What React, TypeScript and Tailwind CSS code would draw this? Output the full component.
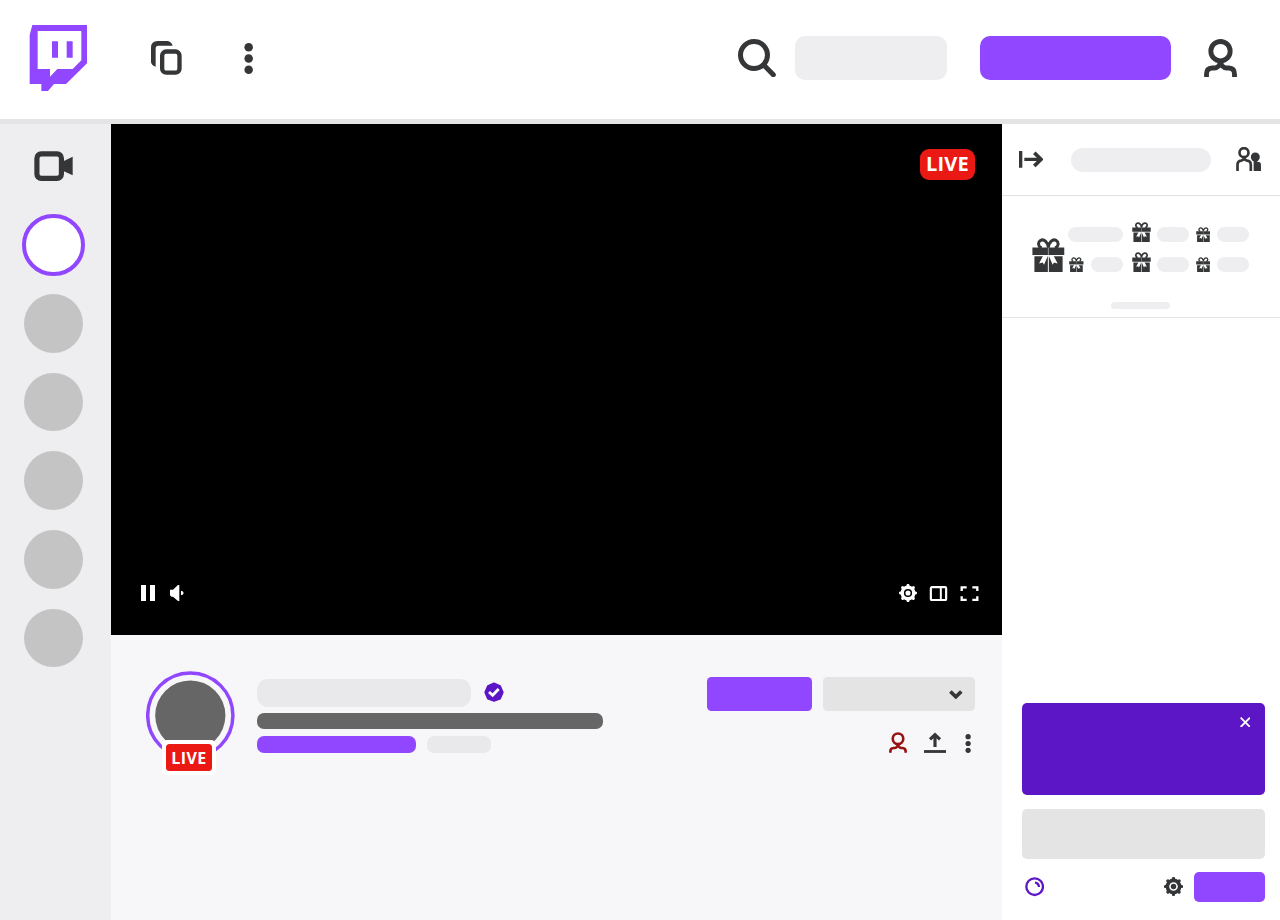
import React from "react";

type IconProps = { className?: string };

function Logo() {
  return (
    <svg viewBox="0 0 174 198" className="h-[66px] w-[58px] shrink-0">
      <path d="M2 30 10 0h164v115l-63 62H75l-18 21H37v-21H2Z" fill="#9147ff" />
      <path d="M26 18h131v88l-26 26H85l-22 23v-23H26Z" fill="#fff" />
      <path d="M69 49h18v49H69zM113 49h18v49h-18z" fill="#9147ff" />
    </svg>
  );
}

function CopyIcon({ className }: IconProps) {
  return (
    <svg viewBox="0 0 93 102" className={className}>
      <path d="M0 20Q0 0 20 0h31q11 3 14 14H22q-8 0-8 8v55Q2 74 0 64Z" fill="currentColor" />
      <rect x="33.5" y="31.5" width="52" height="63.5" rx="12" fill="none" stroke="currentColor" strokeWidth="13" />
    </svg>
  );
}

function DotsIcon({ className }: IconProps) {
  return (
    <svg viewBox="0 0 27 93" className={className} fill="currentColor">
      <circle cx="14" cy="13" r="12.8" />
      <circle cx="14" cy="46.5" r="12.8" />
      <circle cx="14" cy="80" r="12.8" />
    </svg>
  );
}

function SearchIcon({ className }: IconProps) {
  return (
    <svg viewBox="0 0 114 114" className={className} fill="none" stroke="currentColor" strokeWidth="15" strokeLinecap="round">
      <circle cx="48" cy="48" r="40.5" />
      <path d="m78 79 28 28" />
    </svg>
  );
}

function PersonIcon({ className }: IconProps) {
  return (
    <svg viewBox="0 0 99 114" className={className} fill="none" stroke="currentColor" strokeWidth="14.5">
      <circle cx="49.5" cy="36.5" r="29" />
      <path d="M7.500 114v-9q0-17 17-18h7q12 0 22-19" />
      <path d="M91.500 114v-9q0-17-17-18h-7q-12 0-22-19" />
    </svg>
  );
}

function CameraIcon({ className }: IconProps) {
  return (
    <svg viewBox="0 0 117 90" className={className}>
      <rect x="8.75" y="8.75" width="73.5" height="73.5" rx="13" fill="none" stroke="currentColor" strokeWidth="15.5" />
      <path d="m88 31 28-14v56L88 60Z" fill="currentColor" />
    </svg>
  );
}

function CollapseIcon({ className }: IconProps) {
  return (
    <svg viewBox="0 0 73 50" className={className} fill="none" stroke="currentColor" strokeWidth="10">
      <path d="M5 0v50M16 25h50" />
      <path d="m46 5 20 20-20 20" strokeWidth="11" />
    </svg>
  );
}

function PeopleIcon({ className }: IconProps) {
  return (
    <svg viewBox="0 0 76 72" className={className}>
      <g fill="none" stroke="currentColor" strokeWidth="8">
        <circle cx="24" cy="17" r="13.5" />
        <path d="M4.500 72V54q0-12 11-13 6-1 9-7 3 6 9 7 11 1 11 13v18" />
      </g>
      <circle cx="58" cy="30" r="13.500" fill="currentColor" />
      <path d="M53 38h11v7h4q7 0 7 7v20H53Z" fill="currentColor" />
    </svg>
  );
}

function GiftIcon({ className }: IconProps) {
  return (
    <svg viewBox="0 0 98 104" className={className}>
      <path d="M1 29h96v22H1zM7 55h40.500v49H7zM50.500 55H92v49H50.500z" fill="currentColor" />
      <path d="M49 29C48 13 36 2 26 7c-10 6-8 19 3 23M49 29C50 13 62 2 72 7c10 6 8 19-3 23" fill="none" stroke="currentColor" strokeWidth="9" />
      <path d="M34 52 21 77l11-3 4 7 12-28ZM64 52l13 25-11-3-4 7-12-28Z" fill="#fff" />
      <path d="M49 30v21" stroke="#fff" strokeWidth="1.500" />
    </svg>
  );
}

function GearIcon({ className }: IconProps) {
  return (
    <svg viewBox="-28 -28 56 56" className={className}>
      <circle r="18" fill="none" stroke="currentColor" strokeWidth="10.500" />
      <circle r="8" fill="currentColor" />
      <path
        d="M0-21.500v-2M0 21.500v2M-21.500 0h-2M21.500 0h2M15-15l1.500-1.500M-15-15l-1.500-1.500M15 15l1.500 1.500M-15 15l-1.500 1.500"
        stroke="currentColor"
        strokeWidth="9.500"
        strokeLinecap="round"
      />
    </svg>
  );
}

function PauseIcon() {
  return (
    <svg viewBox="0 0 42 48" className="h-4 w-[14px]" fill="currentColor">
      <path d="M0 0h15v48H0zM27 0h15v48H27z" />
    </svg>
  );
}

function SpeakerIcon() {
  return (
    <svg viewBox="0 0 43 48" className="h-4 w-[14.300px]" fill="currentColor">
      <path d="M0 14h9L24 0h4v48h-4L9 35H4l-4-4ZM33 17q8 1 8 7t-8 7Z" />
    </svg>
  );
}

function ColumnsIcon() {
  return (
    <svg viewBox="0 0 57 46" className="h-[15.300px] w-[19px]" fill="none" stroke="currentColor">
      <rect x="5.500" y="3.500" width="46" height="39" rx="3.500" strokeWidth="6.500" />
      <path d="M35.500 3v40" strokeWidth="6" />
    </svg>
  );
}

function FullscreenIcon() {
  return (
    <svg viewBox="0 0 57 46" className="h-[15.300px] w-[19px]" fill="none" stroke="currentColor" strokeWidth="7">
      <path d="M5 15V4h15M37 4h15v11M52 31v11H37M20 42H5V31" />
    </svg>
  );
}

function VerifiedIcon() {
  return (
    <svg viewBox="0 0 60 60" className="size-5">
      <path
        d="m30 4 18.500 8 8 19-8 19L30 57l-18.500-7-8-19 8-19Z"
        fill="#5c16c5"
        stroke="#5c16c5"
        strokeWidth="5"
        strokeLinejoin="round"
      />
      <path d="m15 30 11 10 18-19" fill="none" stroke="#fff" strokeWidth="8.500" />
    </svg>
  );
}

function ChevronIcon() {
  return (
    <svg viewBox="0 0 41 28" className="h-[9.300px] w-[13.700px]" fill="none" stroke="currentColor" strokeWidth="11">
      <path d="m4 4.500 16.500 16L37 4.500" />
    </svg>
  );
}

function ShareIcon() {
  return (
    <svg viewBox="0 0 66 63" className="h-[21px] w-[22px]" fill="none" stroke="currentColor" strokeWidth="9.500">
      <path d="M33 45V9M18 22 33 8l15 14" />
      <path d="M0 58.500h66" strokeWidth="8.500" />
    </svg>
  );
}

function CloseIcon() {
  return (
    <svg viewBox="0 0 32 32" className="size-[10.700px]" fill="none" stroke="#fff" strokeWidth="5.500">
      <path d="m2 2 28 28M30 2 2 30" />
    </svg>
  );
}

function PointsIcon() {
  return (
    <svg viewBox="0 0 58 58" className="size-[19.300px]" fill="none" stroke="#5c16c5">
      <circle cx="29" cy="29" r="25" strokeWidth="7" />
      <path d="M30 17q11 1 12 13" strokeWidth="7" />
    </svg>
  );
}

function AvatarRing() {
  return (
    <svg viewBox="0 0 89 89" className="size-[89px]">
      <circle cx="44.300" cy="44.500" r="42.600" fill="none" stroke="#9147ff" strokeWidth="3.500" />
      <circle cx="44.300" cy="44.500" r="35.100" fill="#666" />
    </svg>
  );
}

const Pill = ({ className }: IconProps) => <div className={`shrink-0 bg-[#eeeef0] ${className}`} />;

const channels = [1, 2, 3, 4, 5];

function Header() {
  return (
    <header className="flex h-[124px] shrink-0 items-center border-b-[5px] border-[#e4e4e4] bg-white pr-[42.700px] pb-[3px] pl-[29px]">
      <Logo />
      <CopyIcon className="ml-[64px] h-[34px] w-[31px]" />
      <DotsIcon className="ml-[62px] h-[31px] w-[9px]" />
      <SearchIcon className="ml-auto size-[38px]" />
      <Pill className="ml-[19px] h-[43.500px] w-[152px] rounded-[10px]" />
      <div className="ml-[33px] h-[43.500px] w-[190.700px] rounded-[10px] bg-[#9147ff]" />
      <PersonIcon className="ml-[33.300px] h-[38px] w-[33px]" />
    </header>
  );
}

function Sidebar() {
  return (
    <aside className="flex w-[110.700px] shrink-0 flex-col items-center bg-[#eeeef0] pt-[27px] pr-[4px]">
      <CameraIcon className="h-[30px] w-[39px]" />
      <div className="mt-[32.500px] size-[62.700px] shrink-0 rounded-full border-[4px] border-[#9147ff] bg-white" />
      <div className="mt-[17.700px] flex flex-col gap-[19.900px]">
        {channels.map((id) => (
          <div key={id} className="size-[58.800px] rounded-full bg-[#c4c4c4]" />
        ))}
      </div>
    </aside>
  );
}

function Player() {
  return (
    <section className="flex h-[511.300px] shrink-0 flex-col justify-between bg-black pt-[24.500px] pb-[34px] text-white">
      <div className="mr-[26.800px] flex h-[31.700px] w-[55.700px] items-center justify-center self-end rounded-[9px] bg-[#eb1913] text-[20px] leading-none font-bold tracking-[0.200px]">
        LIVE
      </div>
      <div className="flex h-4 items-center pr-[23px] pl-[30.300px]">
        <PauseIcon />
        <div className="ml-[15px]">
          <SpeakerIcon />
        </div>
        <GearIcon className="ml-auto size-[18px]" />
        <div className="ml-[12px]">
          <ColumnsIcon />
        </div>
        <div className="ml-[12px]">
          <FullscreenIcon />
        </div>
      </div>
    </section>
  );
}

function StreamInfo() {
  return (
    <section className="flex items-start pt-[35.700px] pr-[27px] pl-[35.300px]">
      <div className="relative size-[88.700px] shrink-0">
        <AvatarRing />
        <div className="absolute top-[69px] left-[16px] flex h-[35.300px] w-[54px] items-center justify-center rounded-[5px] bg-white">
          <div className="flex h-[26.700px] w-[46px] items-center justify-center rounded-[3.500px] bg-[#eb1913] text-[16px] leading-none font-bold tracking-[0.500px] text-white">
            LIVE
          </div>
        </div>
      </div>
      <div className="mt-[7.700px] ml-[22px] w-[346.500px]">
        <div className="flex items-start">
          <div className="h-[28px] w-[214.300px] rounded-[11px] bg-[#e9e9eb]" />
          <div className="mt-[3px] ml-[13px]">
            <VerifiedIcon />
          </div>
        </div>
        <div className="mt-[6px] h-[16.500px] rounded-[7px] bg-[#666]" />
        <div className="mt-[7px] flex gap-[11px]">
          <div className="h-[17px] w-[159.300px] rounded-[7px] bg-[#9147ff]" />
          <div className="h-[17px] w-[64.500px] rounded-[7px] bg-[#e9e9eb]" />
        </div>
      </div>
      <div className="mt-[5.700px] ml-auto flex flex-col">
        <div className="flex gap-[10.800px]">
          <div className="h-[34.700px] w-[105px] rounded-[4.500px] bg-[#9147ff]" />
          <div className="flex h-[34.700px] w-[152.500px] items-center justify-end rounded-[4.500px] bg-[#e4e4e4] pt-[1px] pr-[12.500px]">
            <ChevronIcon />
          </div>
        </div>
        <div className="mt-[21px] flex h-[20.500px] items-center self-end pr-[4px]">
          <PersonIcon className="h-[21px] w-[18px] text-[#971311]" />
          <div className="ml-[17.500px]">
            <ShareIcon />
          </div>
          <DotsIcon className="mt-[1px] ml-[19px] h-[19px] w-[6px]" />
        </div>
      </div>
    </section>
  );
}

function GiftBoard() {
  return (
    <section className="flex h-[121.500px] shrink-0 flex-col border-b-[1.500px] border-[#e4e4e4] pt-[26px] pl-[30px]">
      <div className="flex items-end">
        <GiftIcon className="h-[34.500px] w-[32.700px]" />
        <div className="flex flex-col gap-[10px]">
          <div className="flex h-5 items-end">
            <Pill className="ml-[3.500px] h-[14.700px] w-[54.500px] rounded-full" />
            <GiftIcon className="ml-[9px] h-5 w-[19px]" />
            <Pill className="ml-[6.300px] h-[14.700px] w-[32px] rounded-full" />
            <GiftIcon className="ml-[6.700px] h-[15.500px] w-[14.700px]" />
            <Pill className="ml-[7px] h-[14.700px] w-[32px] rounded-full" />
          </div>
          <div className="flex h-5 items-end">
            <GiftIcon className="ml-[4.300px] h-[15.500px] w-[14.700px]" />
            <Pill className="ml-[7.700px] h-[14.700px] w-[32px] rounded-full" />
            <GiftIcon className="ml-[8.300px] h-5 w-[19px]" />
            <Pill className="ml-[6.300px] h-[14.700px] w-[32px] rounded-full" />
            <GiftIcon className="ml-[6.700px] h-[15.500px] w-[14.700px]" />
            <Pill className="ml-[7px] h-[14.700px] w-[32px] rounded-full" />
          </div>
        </div>
      </div>
      <Pill className="mt-[29.500px] ml-[78.700px] h-[7.300px] w-[59.500px] rounded-full" />
    </section>
  );
}

function Chat() {
  return (
    <aside className="flex w-[278px] shrink-0 flex-col bg-white">
      <div className="flex h-[72px] shrink-0 items-center border-b border-[#e0e0e0] pr-[18.500px] pl-[17px]">
        <CollapseIcon className="h-[16.700px] w-[24.300px]" />
        <Pill className="ml-[27.500px] h-[24px] w-[140px] rounded-full" />
        <PeopleIcon className="mb-[1px] ml-auto h-[24px] w-[25.300px]" />
      </div>
      <GiftBoard />
      <div className="mt-auto flex flex-col pr-[15.500px] pb-[18px] pl-[20px]">
        <div className="flex h-[92px] items-start justify-end rounded-[5px] bg-[#5c16c5] pt-[13.700px] pr-[14.300px]">
          <CloseIcon />
        </div>
        <div className="mt-[14.300px] h-[49.300px] rounded-[5px] bg-[#e4e4e4]" />
        <div className="mt-[13.400px] flex h-[30px] items-center pl-[3px]">
          <PointsIcon />
          <GearIcon className="mb-[1px] ml-auto size-[19px]" />
          <div className="ml-[10.700px] h-[30px] w-[70.700px] rounded-[5px] bg-[#9147ff]" />
        </div>
      </div>
    </aside>
  );
}

export default function App() {
  return (
    <div className="flex h-[920px] w-[1280px] flex-col overflow-hidden bg-white font-['Open_Sans','Noto_Sans',sans-serif] text-[#353637]">
      <Header />
      <div className="flex min-h-0 flex-1">
        <Sidebar />
        <main className="flex min-w-0 flex-1 flex-col bg-[#f7f7f9]">
          <Player />
          <StreamInfo />
        </main>
        <Chat />
      </div>
    </div>
  );
}
